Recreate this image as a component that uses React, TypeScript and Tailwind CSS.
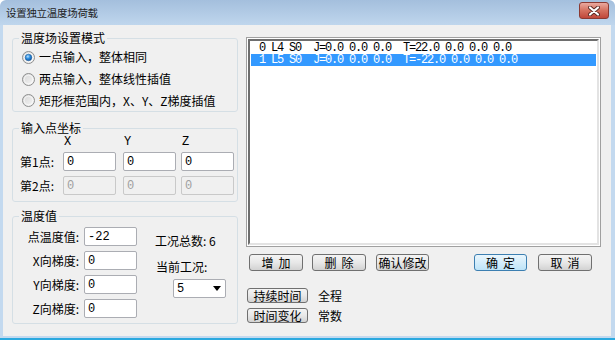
import React from "react";

const CJK = "font-['Noto_Sans_CJK_SC','Liberation_Sans',sans-serif]";
const MONO = "font-['Liberation_Mono','Noto_Sans_CJK_SC',monospace]";

function Radio({ checked }: { checked?: boolean }) {
  return (
    <svg width="13" height="13" viewBox="0 0 13 13" className="shrink-0">
      <defs>
        <linearGradient id="rg" x1="0" y1="0" x2="1" y2="1">
          <stop offset="0" stopColor="#d5d5d5" />
          <stop offset="1" stopColor="#f7f7f7" />
        </linearGradient>
        <radialGradient id="dot" cx="0.4" cy="0.35" r="0.7">
          <stop offset="0" stopColor="#b9e2ff" />
          <stop offset="0.45" stopColor="#2f8fe0" />
          <stop offset="1" stopColor="#0c4f9a" />
        </radialGradient>
      </defs>
      <circle cx="6.5" cy="6.5" r="6" fill="url(#rg)" stroke="#8e8f8f" strokeWidth="1" />
      <circle cx="6.5" cy="6.5" r="4.3" fill="none" stroke="#ffffff" strokeWidth="0.8" opacity="0.8" />
      {checked && <circle cx="6.5" cy="6.5" r="3.3" fill="url(#dot)" stroke="#1b5a9a" strokeWidth="0.5" />}
    </svg>
  );
}

function Input({ value, disabled, w = "w-[52px]" }: { value: string; disabled?: boolean; w?: string }) {
  return (
    <div
      className={`${w} h-[19px] rounded-[2px] border flex items-center pl-[3px] text-[12px] leading-[14px] ${MONO} ${
        disabled ? "bg-[#f0f0f0] border-[#c9c9c9] text-[#a0a0a0]" : "bg-white border-[#abadb3] text-black"
      }`}
    >
      {value}
    </div>
  );
}

function Btn({ label, w, def, h = "h-[17px]" }: { label: string; w: string; def?: boolean; h?: string }) {
  const parts = label.split(" ");
  return (
    <div
      className={`${w} ${h} rounded-[3px] border flex items-center justify-center gap-[5px] text-[12px] leading-[13px] ${
        def
          ? "border-[#3c7fb1] bg-gradient-to-b from-[#eaf6fd] to-[#bee4f8]"
          : "border-[#707070] bg-gradient-to-b from-[#f4f4f4] via-[#e8e8e8] to-[#d2d2d2]"
      }`}
    >
      {parts.map((p, i) => (
        <span key={i}>{p}</span>
      ))}
    </div>
  );
}

function Group({ title, children, className = "" }: { title: string; children: React.ReactNode; className?: string }) {
  return (
    <fieldset className={`border border-[#d5dfe5] rounded-[3px] ${className}`}>
      <legend className="ml-[6px] px-[2px] text-[12px] leading-[14px]">{title}</legend>
      {children}
    </fieldset>
  );
}

export default function App() {
  const rows = [
    "0 L4 S0  J=0.0 0.0 0.0  T=22.0 0.0 0.0 0.0",
    "1 L5 S0  J=0.0 0.0 0.0  T=-22.0 0.0 0.0 0.0",
  ];
  return (
    <div className={`w-[615px] h-[340px] overflow-hidden flex flex-col bg-[#c3d9ef] rounded-t-[6px] border-b-2 border-b-[#2aa9df] text-black ${CJK}`}>
      {/* title bar */}
      <div className="h-[25px] shrink-0 flex items-center justify-between pl-[6px] pr-[6px] rounded-t-[6px] bg-gradient-to-b from-[#a4bfdd] to-[#bfd6ed]">
        <span className="text-[10.5px] leading-[14px] tracking-[-0.3px] text-[#1e1e1e]">设置独立温度场荷载</span>
        <div className="w-[30px] h-[17px] mt-[-4px] rounded-[3px] border border-[#8b3a33] bg-gradient-to-b from-[#e9a99f] via-[#d4705f] to-[#c0473a] flex items-center justify-center">
          <svg width="12" height="10" viewBox="0 0 12 10">
            <path d="M2 1.5 L10 8.5 M10 1.5 L2 8.5" stroke="#5a2a25" strokeWidth="4" strokeLinecap="round" />
            <path d="M2 1.5 L10 8.5 M10 1.5 L2 8.5" stroke="#ffffff" strokeWidth="2.2" strokeLinecap="round" />
          </svg>
        </div>
      </div>

      {/* body */}
      <div className="flex-1 ml-[3px] mr-[4px] mb-[2px] bg-[#f0f0f0] flex">
        {/* left column */}
        <div className="ml-[9px] pt-[6px] w-[226px] flex flex-col">
          <Group title="温度场设置模式">
            <div className="pt-[1px] flex flex-col">
              {[
                { t: "一点输入，整体相同", c: true },
                { t: "两点输入，整体线性插值" },
                { t: "矩形框范围内，X、Y、Z梯度插值" },
              ].map((r, i) => (
                <div key={i} className={`${i === 2 ? "h-[21px]" : "h-[22px]"} flex items-center pl-[9px] gap-[4px] text-[12px] leading-[14px]`}>
                  <Radio checked={r.c} />
                  <span>{r.t}</span>
                </div>
              ))}
            </div>
          </Group>

          <Group title="输入点坐标" className="mt-[9px]">
            <div className="flex flex-col pl-[7px] pb-[6px]">
              <div className={`flex h-[12px] mt-[1px] items-center text-[12px] leading-[12px] ${MONO}`}>
                <div className="w-[43px]" />
                <div className="w-[53px] pl-[1px]">X</div>
                <div className="w-[7px]" />
                <div className="w-[53px] pl-[1px]">Y</div>
                <div className="w-[5px]" />
                <div className="w-[53px] pl-[1px]">Z</div>
              </div>
              <div className="flex items-center mt-[4px] text-[12px] leading-[14px]">
                <div className="w-[43px]">第1点:</div>
                <Input value="0" w="w-[53px]" />
                <div className="w-[7px]" />
                <Input value="0" w="w-[53px]" />
                <div className="w-[5px]" />
                <Input value="0" w="w-[53px]" />
              </div>
              <div className="flex items-center mt-[5px] text-[12px] leading-[14px]">
                <div className="w-[43px]">第2点:</div>
                <Input value="0" w="w-[53px]" disabled />
                <div className="w-[7px]" />
                <Input value="0" w="w-[53px]" disabled />
                <div className="w-[5px]" />
                <Input value="0" w="w-[53px]" disabled />
              </div>
            </div>
          </Group>

          <Group title="温度值" className="mt-[7px]">
            <div className="flex pt-[4px] pb-[5px]">
              <div className="flex flex-col gap-[5px]">
                {[
                  ["点温度值:", "-22"],
                  ["X向梯度:", "0"],
                  ["Y向梯度:", "0"],
                  ["Z向梯度:", "0"],
                ].map(([l, v], i) => (
                  <div key={i} className="flex items-center text-[12px] leading-[14px]">
                    <div className="w-[67px] text-right pr-[1px]">{l}</div>
                    <div className="w-[4px]" />
                    <Input value={v} w="w-[53px]" />
                  </div>
                ))}
              </div>
              <div className="ml-[18px] flex flex-col text-[12px] leading-[14px]">
                <div className="mt-[7px]">工况总数: 6</div>
                <div className="mt-[12px] ml-[1px]">当前工况:</div>
                <div className={`mt-[5px] ml-[18px] w-[53px] h-[19px] bg-white border border-[#abadb3] rounded-[2px] flex items-center justify-between pl-[3px] pr-[4px] ${MONO}`}>
                  <span>5</span>
                  <svg width="8" height="5" viewBox="0 0 8 5">
                    <path d="M0 0 L8 0 L4 5 Z" fill="#000" />
                  </svg>
                </div>
              </div>
            </div>
          </Group>
        </div>

        {/* right column */}
        <div className="ml-[8px] pt-[12px] flex flex-col">
          <div className="w-[355px] h-[210px] border border-[#a0a0a0] bg-white p-px">
            <div className="w-full h-full border-2 border-t-[#6e6e6e] border-l-[#6e6e6e] border-r-[#e3e3e3] border-b-[#e3e3e3] bg-white pt-[1px] pl-[1px] pr-[1px]">
              {rows.map((r, i) => (
                <div
                  key={i}
                  className={`h-[12px] flex items-center pl-[8px] whitespace-pre text-[12px] leading-[12px] tracking-[-1.2px] ${MONO} ${
                    i === 1 ? "bg-[#3399ff] text-white" : "text-black"
                  }`}
                >
                  {r}
                </div>
              ))}
            </div>
          </div>

          <div className="flex mt-[7px] ml-[3px]">
            <Btn w="w-[54px]" label="增 加" />
            <div className="w-[9px]" />
            <Btn w="w-[54px]" label="删 除" />
            <div className="w-[10px]" />
            <Btn w="w-[53px]" label="确认修改" />
            <div className="w-[45px]" />
            <Btn w="w-[53px]" def label="确 定" />
            <div className="w-[11px]" />
            <Btn w="w-[54px]" label="取 消" />
          </div>

          <div className="flex items-center mt-[17px] ml-[1px] text-[12px] leading-[14px]">
            <Btn w="w-[61px]" h="h-[15px]" label="持续时间" />
            <span className="ml-[10px]">全程</span>
          </div>
          <div className="flex items-center mt-[5px] ml-[1px] text-[12px] leading-[14px]">
            <Btn w="w-[61px]" h="h-[15px]" label="时间变化" />
            <span className="ml-[10px]">常数</span>
          </div>
        </div>
      </div>
    </div>
  );
}
